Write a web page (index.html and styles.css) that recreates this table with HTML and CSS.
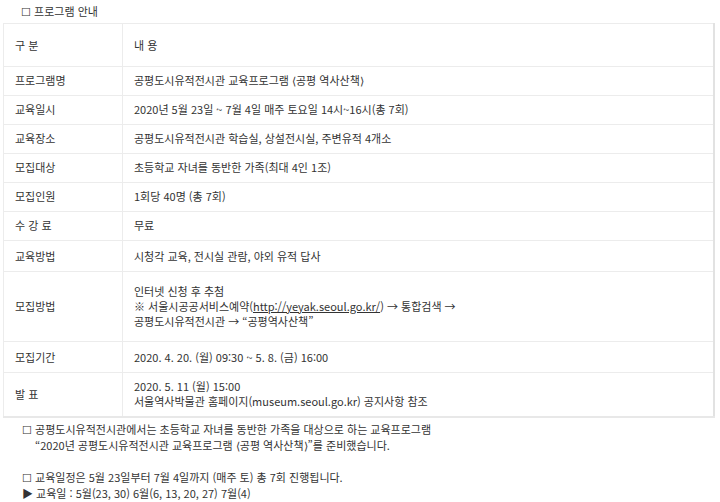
FILE: index.html
```html
<!DOCTYPE html>
<html lang="ko">
<head>
  <meta charset="UTF-8" />
  <title>프로그램 안내</title>
  <link rel="stylesheet" href="styles.css">
</head>
<body>
  <div class="title">☐ 프로그램 안내</div>

  <table class="info">
    <tr class="head">
      <td class="label">구 분</td>
      <td>내 용</td>
    </tr>
    <tr>
      <td class="label">프로그램명</td>
      <td>공평도시유적전시관 교육프로그램 ⟨공평 역사산책⟩</td>
    </tr>
    <tr>
      <td class="label">교육일시</td>
      <td>2020년 5월 23일 ~ 7월 4일 매주 토요일 14시~16시(총 7회)</td>
    </tr>
    <tr>
      <td class="label">교육장소</td>
      <td>공평도시유적전시관 학습실, 상설전시실, 주변유적 4개소</td>
    </tr>
    <tr>
      <td class="label">모집대상</td>
      <td>초등학교 자녀를 동반한 가족(최대 4인 1조)</td>
    </tr>
    <tr>
      <td class="label">모집인원</td>
      <td>1회당 40명 (총 7회)</td>
    </tr>
    <tr>
      <td class="label">수 강 료</td>
      <td>무료</td>
    </tr>
    <tr class="mid">
      <td class="label">교육방법</td>
      <td>시청각 교육, 전시실 관람, 야외 유적 답사</td>
    </tr>
    <tr class="tall">
      <td class="label">모집방법</td>
      <td>인터넷 신청 후 추첨<br />
        ※ 서울시공공서비스예약(<a href="#">http://yeyak.seoul.go.kr/</a>) → 통합검색 →<br />
        공평도시유적전시관 → “공평역사산책”</td>
    </tr>
    <tr class="mid">
      <td class="label">모집기간</td>
      <td>2020. 4. 20. (월) 09:30 ~ 5. 8. (금) 16:00</td>
    </tr>
    <tr>
      <td class="label">발 표</td>
      <td>2020. 5. 11 (월) 15:00<br />
        서울역사박물관 홈페이지(museum.seoul.go.kr) 공지사항 참조</td>
    </tr>
  </table>

  <div class="notes">
    <p>☐ 공평도시유적전시관에서는 초등학교 자녀를 동반한 가족을 대상으로 하는 교육프로그램<br />
      <span class="indent">“2020년 공평도시유적전시관 교육프로그램 ⟨공평 역사산책⟩”를 준비했습니다.</span></p>
    <p>☐ 교육일정은 5월 23일부터 7월 4일까지 (매주 토) 총 7회 진행됩니다.<br />
      ▶ 교육일 : 5월(23, 30) 6월(6, 13, 20, 27) 7월(4)</p>
  </div>
</body>
</html>
```

FILE: styles.css
```css
body {
  margin: 0;
  padding: 4px 0 0 3px;
  background: #fff;
  color: #333;
  font-family: "Noto Sans CJK KR", "Noto Sans", sans-serif;
  font-size: 11px;
  line-height: 15px;
}
.title { padding-left: 18px; height: 19px; }

table.info {
  border-collapse: collapse;
  width: 712px;
  border-right: 2px solid #e2e2e2;
  border-bottom: 2px solid #e8e8e8;
}
.info td {
  border: 1px solid #ececec;
  padding: 6px 11px 7px;
  text-align: left;
  vertical-align: middle;
}
.info td.label { width: 96px; }
.info .head td { padding: 14px 11px 13px; }
.info .mid td { padding: 8px 11px 7px; }
.info .tall td { padding: 12px 11px 12px; }
.info a { color: #333; text-decoration: underline; }

.notes { padding: 3px 0 0 19px; line-height: 16px; }
.notes p { margin: 0 0 16px; }
.notes .indent { padding-left: 13px; }
```
